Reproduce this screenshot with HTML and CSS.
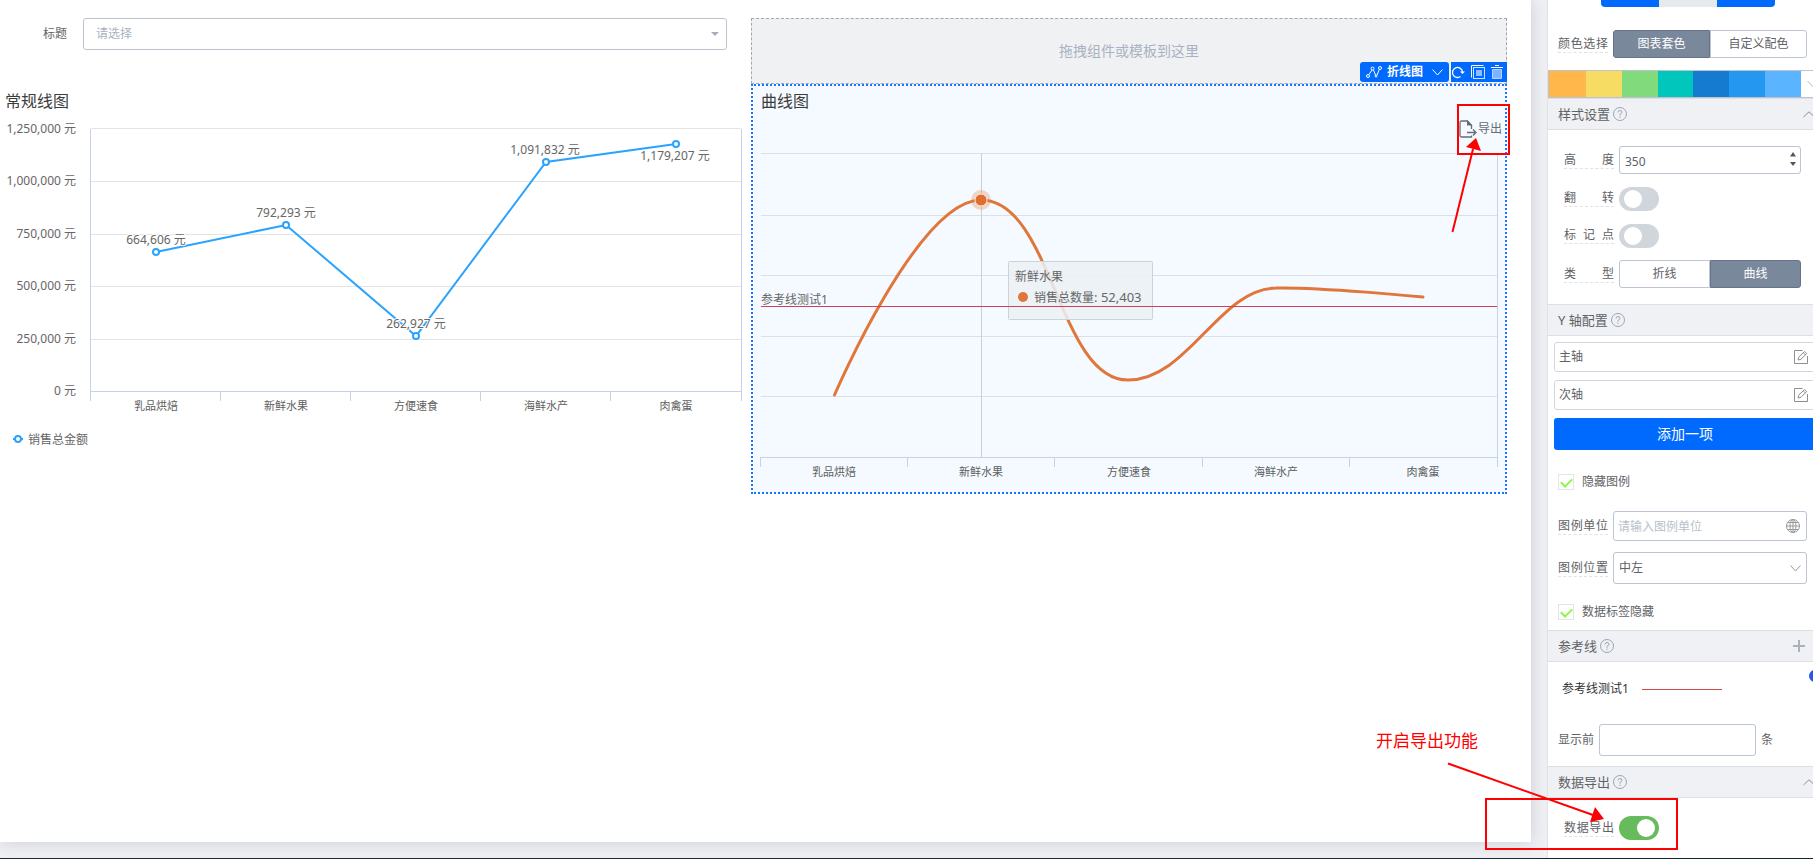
FILE: index.html
```html
<!DOCTYPE html>
<html lang="zh-CN">
<head>
<meta charset="utf-8">
<title>图表设计</title>
<link rel="stylesheet" href="styles.css">
</head>
<body>
<div class="app">
  <main class="stage">
    <div class="sheet">
      <section class="col">
        <div class="filter">
          <label class="filter-label" for="title-select">标题</label>
          <div class="select-box">
            <select id="title-select" class="filter-select"><option>请选择</option></select>
            <svg class="caret" width="8" height="4" viewBox="0 0 8 4"><path d="M0 0h8L4 4z" fill="#a3adbd"/></svg>
          </div>
        </div>
        <h2 class="chart-title chart-title-left">常规线图</h2>
        <svg class="chart" viewBox="0 115 751 340" role="img" aria-label="常规线图">
          <g stroke="#e2e3e5" fill="none">
            <path d="M91 128.500H741M91 181.500H741M91 234.500H741M91 286.500H741M91 339.500H741"/>
          </g>
          <path d="M90.500 129V401M741.500 129V401M90 391.500H742M220.500 391V401M350.500 391V401M480.500 391V401M610.500 391V401" stroke="#c6d2e8" fill="none"/>
          <g class="tick" text-anchor="end">
            <text x="76" y="133">1,250,000 元</text>
            <text x="76" y="185">1,000,000 元</text>
            <text x="76" y="238">750,000 元</text>
            <text x="76" y="290">500,000 元</text>
            <text x="76" y="343">250,000 元</text>
            <text x="76" y="395">0 元</text>
          </g>
          <polyline points="156,252 286,225 416,336 546,162 676,144" fill="none" stroke="#2aa3ff" stroke-width="2"/>
          <g class="tick halo" text-anchor="middle">
            <text x="156" y="244">664,606 元</text>
            <text x="286" y="217">792,293 元</text>
            <text x="416" y="328">262,927 元</text>
            <text x="545" y="154">1,091,832 元</text>
            <text x="675" y="160">1,179,207 元</text>
          </g>
          <g fill="#fff" stroke="#2aa3ff" stroke-width="2">
            <circle cx="156" cy="252" r="3"/><circle cx="286" cy="225" r="3"/><circle cx="416" cy="336" r="3"/><circle cx="546" cy="162" r="3"/><circle cx="676" cy="144" r="3"/>
            <path d="M13 439H23"/><circle cx="18" cy="439" r="3"/>
          </g>
          <g class="cat" text-anchor="middle">
            <text x="156" y="410">乳品烘焙</text><text x="286" y="410">新鲜水果</text><text x="416" y="410">方便速食</text><text x="546" y="410">海鲜水产</text><text x="676" y="410">肉禽蛋</text>
          </g>
          <text class="tick" x="28" y="444">销售总金额</text>
        </svg>
      </section>

      <section class="col">
        <div class="dropzone">拖拽组件或模板到这里</div>
        <div class="card">
          <div class="toolbar">
            <button class="tool-type" type="button">
              <svg width="16" height="12" viewBox="0 0 16 12" fill="none" stroke="#fff"><path d="M3 8.500L6 4M7.500 4L9.500 9M11 9L13.500 3"/><circle cx="2" cy="10" r="1.500"/><circle cx="6.500" cy="2.500" r="1.500"/><circle cx="10" cy="10" r="1"/><circle cx="14" cy="2" r="1.500"/></svg>
              <span>折线图</span>
              <svg width="11" height="7" viewBox="0 0 11 7" fill="none" stroke="#fff"><path d="M.5 .5L5.500 6L10.500 .5"/></svg>
            </button>
            <div class="tool-actions">
              <button type="button" aria-label="刷新"><svg width="13" height="14" viewBox="0 0 13 14" fill="none" stroke="#fff" stroke-width="1.300"><path d="M8.500 11.500A5 5 0 1 1 10.500 7"/><path d="M8 6.500h5L10.500 9z" fill="#fff" stroke="none"/></svg></button>
              <button type="button" aria-label="复制"><svg width="14" height="14" viewBox="0 0 14 14" fill="none" stroke="#fff"><path d="M12.500 .5H.5V12.500" /><rect x="2.500" y="2.500" width="11" height="11" stroke="#cfe2ff"/><rect x="5" y="5" width="6" height="6" fill="#8dbcff" stroke="none"/></svg></button>
              <button type="button" aria-label="删除"><svg width="12" height="14" viewBox="0 0 12 14" fill="none" stroke="#fff"><path d="M0 2.500H12M4 .5H8"/><path d="M1.500 4.500H10.500V13.500H1.500z" fill="#7fb3ff" stroke="#b5d3ff"/></svg></button>
            </div>
          </div>
          <h2 class="chart-title">曲线图</h2>
          <button class="export" type="button">
            <svg width="18" height="18" viewBox="0 0 18 18" fill="none" stroke="#666d73" stroke-width="1.300"><path d="M12.500 9V5.500L8.500 1H2.500Q1 1 1 2.500V15.500Q1 17 2.500 17H12.500V15.500"/><path d="M8 0V5.500H13.500z" fill="#666d73" stroke="none"/><path d="M8 12.500H17M14 9.500L17 12.500L14 15.500"/></svg>
            <span>导出</span>
          </button>
          <svg class="chart" viewBox="753 115 752 377" role="img" aria-label="曲线图">
            <path d="M761 153.500H1497M761 215.500H1497M761 275.500H1497M761 336.500H1497M761 396.500H1497" stroke="#dbe0e6" fill="none"/>
            <path d="M760 457.500H1498M1497.500 153V467M760.500 457V467M907.500 457V467M1054.500 457V467M1202.500 457V467M1349.500 457V467" stroke="#c6d2e8" fill="none"/>
            <path d="M981.500 153V457" stroke="#ccd0d5"/>
            <path d="M834.500 395C834.500 395 918 200 981 200C1052 200 1058 380 1128 380C1188 380 1220 288 1276 288C1320 287 1423 297 1423 297" fill="none" stroke="#e0763a" stroke-width="3" stroke-linecap="round"/>
            <circle cx="981" cy="200" r="10" fill="#e0763a" fill-opacity=".28"/>
            <circle cx="981" cy="200" r="6" fill="#de6f2f" stroke="#fbe9df" stroke-width="1"/>
            <text class="tick" x="761" y="304">参考线测试1</text>
            <rect x="1008.500" y="261.500" width="144" height="58" rx="1" fill="#ebf0f5" fill-opacity=".86" stroke="#cdd2d8"/>
            <text class="tick" x="1015" y="281">新鲜水果</text>
            <circle cx="1023" cy="297" r="5" fill="#e0763a"/>
            <text class="tick" x="1034" y="302">销售总数量<tspan class="value">: 52,403</tspan></text>
            <path d="M761 306.500H1497" stroke="#cc4452"/>
            <g class="cat" text-anchor="middle">
              <text x="834" y="476">乳品烘焙</text><text x="981" y="476">新鲜水果</text><text x="1129" y="476">方便速食</text><text x="1276" y="476">海鲜水产</text><text x="1423" y="476">肉禽蛋</text>
            </g>
          </svg>
        </div>
      </section>
    </div>
  </main>

  <aside class="side">
    <div class="side-inner">
      <div class="top-tabs"><button type="button" aria-label="左"></button><button type="button" class="off" aria-label="中"></button><button type="button" aria-label="右"></button></div>
      <div class="row row-color">
        <span class="label">颜色选择</span>
        <div class="seg"><button type="button" class="on">图表套色</button><button type="button">自定义配色</button></div>
      </div>
      <button class="palette" type="button" aria-label="色板">
        <span class="swatches"><span class="c1"></span><span class="c2"></span><span class="c3"></span><span class="c4"></span><span class="c5"></span><span class="c6"></span><span class="c7"></span></span>
        <svg width="12" height="6" viewBox="0 0 12 6" fill="none" stroke="#b0b5bd"><path d="M.5 0L6 5.500L11.500 0"/></svg>
      </button>

      <h3 class="head">样式设置<svg class="help" viewBox="0 0 14 14"><use href="#help"/></svg><svg class="fold" width="12" height="7" viewBox="0 0 12 7" fill="none" stroke="#8a9099"><path d="M.5 6L6 .8L11.500 6"/></svg></h3>
      <div class="group group-style">
        <div class="row">
          <label class="label" for="h">高度</label>
          <div class="num"><input id="h" type="number" value="350"><svg class="spin" width="6" height="14" viewBox="0 0 6 14" fill="#555"><path d="M0 4.500L3 0L6 4.500zM0 10L3 14L6 10z"/></svg></div>
        </div>
        <div class="row row-switch"><label class="label" for="s1">翻转</label><input id="s1" class="switch" type="checkbox"></div>
        <div class="row row-switch"><label class="label" for="s2">标记点</label><input id="s2" class="switch" type="checkbox"></div>
        <div class="row"><span class="label">类型</span><div class="seg"><button type="button">折线</button><button type="button" class="on">曲线</button></div></div>
      </div>

      <h3 class="head">Y 轴配置<svg class="help" viewBox="0 0 14 14"><use href="#help"/></svg></h3>
      <div class="group group-axis">
        <button class="axis" type="button">主轴<svg width="14" height="14" viewBox="0 0 14 14"><use href="#edit"/></svg></button>
        <button class="axis" type="button">次轴<svg width="14" height="14" viewBox="0 0 14 14"><use href="#edit"/></svg></button>
        <button class="add" type="button">添加一项</button>
      </div>
      <div class="group group-legend">
        <label class="tick-row"><input type="checkbox" class="box" checked>隐藏图例</label>
        <div class="row row-unit">
          <label class="label" for="unit">图例单位</label>
          <div class="field"><input id="unit" type="text" placeholder="请输入图例单位"><svg width="14" height="14" viewBox="0 0 14 14" fill="none" stroke="#999"><circle cx="7" cy="7" r="6.500"/><ellipse cx="7" cy="7" rx="3" ry="6.500"/><path d="M7 .5V13.500M.5 7H13.500M1.500 3.500H12.500M1.500 10.500H12.500"/></svg></div>
        </div>
        <div class="row row-pos">
          <label class="label" for="pos">图例位置</label>
          <div class="field"><select id="pos"><option>中左</option></select><svg width="11" height="7" viewBox="0 0 11 7" fill="none" stroke="#999"><path d="M.5 .5L5.500 6L10.500 .5"/></svg></div>
        </div>
        <label class="tick-row"><input type="checkbox" class="box" checked>数据标签隐藏</label>
      </div>

      <h3 class="head">参考线<svg class="help" viewBox="0 0 14 14"><use href="#help"/></svg><svg class="plus" width="12" height="12" viewBox="0 0 12 12" stroke="#aab2be" stroke-width="2"><path d="M6 0V12M0 6H12"/></svg></h3>
      <div class="refline"><span>参考线测试1</span><i></i><b></b></div>
      <div class="limit"><label for="limit">显示前</label><input id="limit" type="text"><span>条</span></div>

      <h3 class="head">数据导出<svg class="help" viewBox="0 0 14 14"><use href="#help"/></svg><svg class="fold" width="12" height="7" viewBox="0 0 12 7" fill="none" stroke="#8a9099"><path d="M.5 6L6 .8L11.500 6"/></svg></h3>
      <div class="group group-export">
        <div class="row"><label class="label" for="s3">数据导出</label><input id="s3" class="switch" type="checkbox" checked></div>
      </div>
    </div>
  </aside>

  <svg class="notes" width="463" height="859" viewBox="1350 0 463 859" fill="none" stroke="#f00" stroke-width="2">
    <rect x="1458" y="105" width="51" height="49"/>
    <path d="M1452.500 232L1473 149"/><path d="M1476 138L1466 147L1481 151z" fill="#f00" stroke="none"/>
    <rect x="1486" y="799" width="191" height="50"/>
    <path d="M1448 763.500L1593 815"/><path d="M1604 819L1595 807L1590 822z" fill="#f00" stroke="none"/>
    <text x="1376" y="747">开启导出功能</text>
  </svg>
</div>
<footer class="taskbar"></footer>

<svg width="0" height="0" class="defs">
  <symbol id="help" viewBox="0 0 14 14"><g fill="none" stroke="#9aa5b8"><circle cx="7" cy="7" r="6.500"/><path d="M5 5.500Q5 3.500 7 3.500Q9 3.500 9 5.300Q9 6.500 7 7.300V8.700M7 9.700V11"/></g></symbol>
  <symbol id="edit" viewBox="0 0 14 14"><g fill="none" stroke="#8f8f8f"><path d="M8.500 .5H.5V13.500H13.500V6"/><path d="M4 10L4.800 7L10.500 1.500L12.700 3.500L7 9.300zM9.200 2.800L11.400 4.800"/></g></symbol>
</svg>
</body>
</html>
```
FILE: styles.css
```css
* { box-sizing: border-box; }
body {
  margin: 0;
  min-height: 100vh;
  display: flex;
  flex-direction: column;
  background: #f0f1f4;
  color: #606266;
  font: 12px/20px "Noto Sans", "Noto Sans CJK SC", sans-serif;
  overflow: hidden;
}
button, input, select { font: inherit; color: inherit; margin: 0; padding: 0; border: 0; background: none; }
h2, h3 { margin: 0; font-weight: 400; }
.defs { position: absolute; }

.app { flex: 1; display: flex; position: relative; }
.taskbar { height: 1px; background: #10292f; }

.stage { flex: 1; min-width: 0; display: flex; padding: 0 16px 16px 0; }
.sheet {
  flex: 1;
  display: grid;
  grid-template-columns: 751fr 756fr;
  padding: 18px 24px 0 0;
  background: #fff;
  box-shadow: 0 0 18px #c8ccd6;
}
.col { min-width: 0; }

.filter { display: flex; align-items: center; gap: 16px; padding: 0 24px 0 43px; }
.filter-label { line-height: 32px; }
.select-box { flex: 1; position: relative; }
.filter-select {
  display: block;
  width: 100%;
  height: 32px;
  padding: 0 12px;
  border: 1px solid #bcc3cf;
  border-radius: 3px;
  appearance: none;
  color: #a9b2c2;
}
.caret { position: absolute; right: 8px; top: 14px; }

.chart-title { font-size: 16px; line-height: 30px; padding-left: 8px; color: #3c3c3c; }
.chart-title-left { padding-left: 5px; margin-top: 36px; margin-bottom: -1px; }
.chart { display: block; width: 100%; height: auto; }
.tick { font-size: 12px; fill: #666; }
.halo text { paint-order: stroke; stroke: #fff; stroke-width: 2px; }
.value { font-size: 13px; }
.cat { font-size: 11px; fill: #606060; }

.dropzone {
  height: 66px;
  border: 1px dashed #a0a8b5;
  background: #f0f1f3;
  color: #a9b2c2;
  font-size: 14px;
  line-height: 64px;
  text-align: center;
}
.card { position: relative; border: 2px dotted #1a74ff; background: #f4faff; }
.card .chart-title { margin-bottom: -1px; }
.toolbar { position: absolute; right: -2px; top: -24px; display: flex; gap: 2px; height: 20px; color: #fff; }
.tool-type {
  display: flex;
  align-items: center;
  gap: 5px;
  padding: 0 6px;
  border-radius: 3px;
  background: #006aff;
  font-weight: 700;
}
.tool-type span { padding-right: 4px; }
.tool-actions { display: flex; align-items: center; gap: 6px; padding: 0 4px 0 1px; background: #006aff; }
.tool-actions button, .tool-actions svg { display: block; }
.export { position: absolute; right: 3px; top: 33px; display: flex; align-items: center; gap: 1px; color: #666d73; }

.side { width: 266px; overflow: hidden; border-left: 1px solid #dfe2e8; background: #fff; }
.side-inner { width: 274px; }
.top-tabs { display: flex; width: 174px; height: 7px; margin-left: 53px; border-radius: 0 0 4px 4px; overflow: hidden; }
.top-tabs button { flex: 1; background: #006aff; }
.top-tabs .off { background: #e6eaed; }

.row { display: flex; align-items: center; gap: 5px; }
.label { width: 50px; line-height: 16px; text-align-last: justify; border-bottom: 1px dashed #dfe1e5; }
.row-color { margin: 23px 15px 12px 10px; }
.seg { flex: 1; display: flex; }
.seg button { flex: 1; height: 28px; border: 1px solid #bcc5d2; background: #fff; }
.seg button:first-child { border-radius: 3px 0 0 3px; }
.seg button:last-child { border-radius: 0 3px 3px 0; }
.seg .on { background: #7a889b; border-color: #65748a; color: #fff; }

.palette { display: flex; align-items: center; gap: 6px; width: 100%; height: 28px; border: 1px solid #bcc3ce; }
.swatches { display: flex; width: 252px; height: 26px; }
.swatches span { flex: 1; }
.swatches .c1 { flex: 0 0 37px; }
.c1 { background: #ffb74b; }
.c2 { background: #f6dc63; }
.c3 { background: #81da7c; }
.c4 { background: #00c6bb; }
.c5 { background: #147bd0; }
.c6 { background: #2497f1; }
.c7 { background: #5ab4ff; }

.head {
  display: flex;
  align-items: center;
  gap: 3px;
  height: 32px;
  padding: 0 7px 0 10px;
  border: solid #dcdfe6;
  border-width: 1px 0;
  background: #f0f1f4;
  font-size: 13px;
}
.help { width: 14px; height: 14px; }
.fold { margin-left: auto; }
.plus { margin-left: auto; margin-right: 10px; }

.group { display: flex; flex-direction: column; }
.group-style { gap: 12px; padding: 16px 21px 16px 16px; }
.row-switch { height: 25px; }
.num { flex: 1; position: relative; }
.num input { display: block; width: 100%; height: 28px; padding: 2px 5px 0; border: 1px solid #bcc5d2; border-radius: 3px; appearance: textfield; }
.num input::-webkit-inner-spin-button { appearance: none; }
.spin { position: absolute; right: 5px; top: 6px; }
.switch { appearance: none; position: relative; width: 40px; height: 24px; border-radius: 12px; background: #d1d6dd; }
.switch::before { content: ""; position: absolute; left: 5px; top: 3px; width: 18px; height: 18px; border-radius: 50%; background: #fff; }
.switch:checked { background: #67bb5c; }
.switch:checked::before { left: 18px; }

.group-axis { gap: 8px; padding: 6px; }
.axis {
  display: flex;
  align-items: center;
  justify-content: space-between;
  height: 30px;
  padding: 0 17px 0 4px;
  margin-right: -10px;
  border: 1px solid #d0d5de;
  border-radius: 3px;
}
.add { height: 32px; border-radius: 3px; background: #006aff; color: #fff; font-size: 14px; }

.group-legend { padding: 16px 15px 8px 10px; }
.tick-row { display: flex; align-items: center; gap: 8px; }
.box { appearance: none; width: 16px; height: 16px; border: 1px solid #e2e6e8; display: flex; justify-content: center; }
.box:checked::before { content: ""; width: 9px; height: 5px; margin-top: 3px; border: solid #8df545; border-width: 0 0 2px 2px; transform: rotate(-45deg); }
.row-unit { margin: 19px 0 11px; }
.row-pos { margin-bottom: 18px; }
.field { flex: 1; position: relative; }
.field input, .field select { display: block; width: 100%; height: 30px; padding: 0 4px; border: 1px solid #bcc5d2; border-radius: 3px; appearance: none; }
.field select { height: 32px; padding: 0 5px; }
.field input::placeholder { color: #b8bfca; }
.field svg { position: absolute; right: 7px; top: 0; bottom: 0; margin: auto; }
.field select + svg { right: 6px; }

.refline { display: flex; align-items: center; gap: 13px; height: 54px; padding: 0 0 0 14px; margin-bottom: 8px; color: #333; position: relative; }
.refline i { width: 80px; height: 1px; background: #d14b4b; }
.refline b { position: absolute; right: 1px; top: 8px; width: 12px; height: 12px; border-radius: 50%; background: #2a55e5; }
.limit { display: flex; align-items: center; gap: 5px; padding-left: 10px; margin-bottom: 10px; }
.limit input { width: 157px; height: 32px; padding: 0 5px; border: 1px solid #bcc5d2; border-radius: 3px; }
.group-export { padding: 18px 16px; }

.notes { position: absolute; right: 0; top: 0; pointer-events: none; }
.notes text { font-size: 17px; fill: #f00; stroke: none; }
```
